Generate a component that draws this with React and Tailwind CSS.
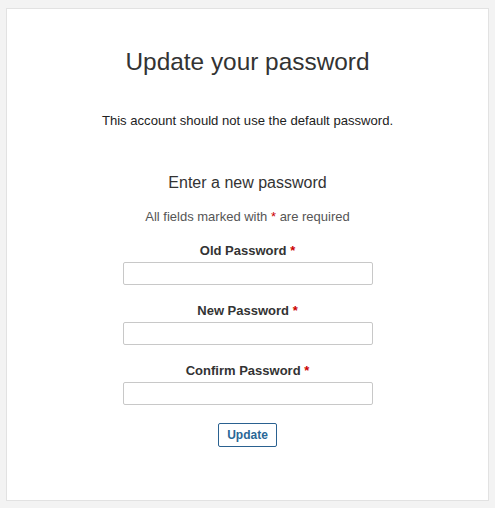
export default function App() {
  const fields = ['Old Password', 'New Password', 'Confirm Password'];
  return (
    <div className="min-h-[508px] bg-[#f3f3f3] px-[6px] pt-[8px] pb-[7px] font-['Liberation_Sans',Arial,sans-serif] text-[#333]">
      <div className="bg-white border border-[#e2e2e2] h-[493px] flex flex-col items-center pt-[39px]">
        <h1 className="text-[24.4px] leading-[28px]">Update your password</h1>
        <p className="mt-[36px] text-[13.1px] leading-[18px] text-[#222]">This account should not use the default password.</p>
        <h2 className="mt-[43px] text-[16px] leading-[20px]">Enter a new password</h2>
        <p className="mt-[16px] text-[13px] leading-[16px] text-[#555]">
          All fields marked with <span className="text-[#c00]">*</span> are required
        </p>
        <form className="flex flex-col items-center" onSubmit={e => e.preventDefault()}>
          {fields.map(f => (
            <div key={f} className="flex flex-col items-center mt-[18px]">
              <label className="text-[13px] leading-[16px] font-bold">
                {f} <span className="text-[#c00]">*</span>
              </label>
              <input type="password" className="mt-[3px] w-[250px] h-[23px] border border-[#c8c8c8] rounded-[2px] bg-white" />
            </div>
          ))}
          <button type="submit" className="mt-[18px] w-[59px] h-[24px] border border-[#2a6190] rounded-[2px] text-[12px] font-bold text-[#2a6796] bg-white">
            Update
          </button>
        </form>
      </div>
    </div>
  );
}
